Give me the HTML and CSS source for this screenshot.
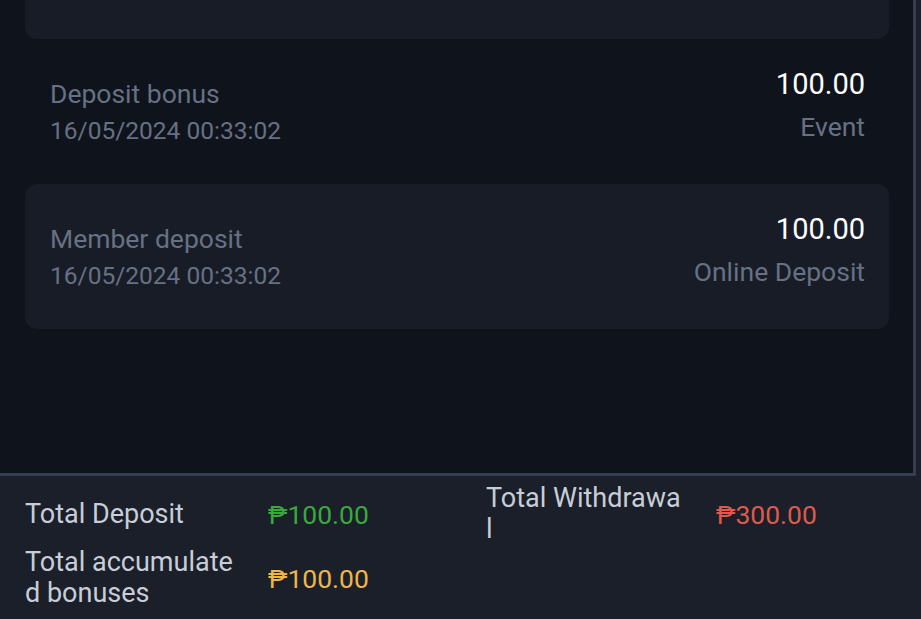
FILE: index.html
```html
<!DOCTYPE html>
<html>
<head>
<meta charset="utf-8">
<link rel="stylesheet" href="styles.css">
</head>
<body>
<div class="screen">
  <div class="list">
    <div class="item card top-cut"></div>
    <div class="item">
      <div class="left">
        <div class="title">Deposit bonus</div>
        <div class="date">16/05/2024 00:33:02</div>
      </div>
      <div class="right">
        <div class="amount">100.00</div>
        <div class="type">Event</div>
      </div>
    </div>
    <div class="item card">
      <div class="left">
        <div class="title">Member deposit</div>
        <div class="date">16/05/2024 00:33:02</div>
      </div>
      <div class="right">
        <div class="amount">100.00</div>
        <div class="type">Online Deposit</div>
      </div>
    </div>
  </div>
  <div class="summary">
    <div class="label l1">Total Deposit</div>
    <div class="value green">₱100.00</div>
    <div class="label l2">Total Withdrawal</div>
    <div class="value red">₱300.00</div>
    <div class="label l1">Total accumulated bonuses</div>
    <div class="value yellow">₱100.00</div>
  </div>
</div>
</body>
</html>
```
FILE: styles.css
```css
* { box-sizing: border-box; }
html, body { margin: 0; padding: 0; }
body {
  background: #1a1f29;
  font-family: Roboto, "Noto Sans", sans-serif;
  width: 921px;
  height: 619px;
  overflow: hidden;
}
.screen {
  display: flex;
  flex-direction: column;
  height: 619px;
}
.list {
  height: 476px;
  width: 916px;
  background: #0f131b;
  border-right: 3px solid #363d51;
  border-bottom: 3px solid #363d51;
  display: flex;
  flex-direction: column;
  padding: 0 24px 0 25px;
  overflow: hidden;
}
.item {
  flex: none;
  height: 145px;
  display: flex;
  justify-content: space-between;
  padding: 0 24px 0 25px;
  border-radius: 12px;
}
.item.card { background: #171c26; }
.item.top-cut {
  height: 39px;
  border-radius: 0 0 12px 12px;
}
.left {
  display: flex;
  flex-direction: column;
  justify-content: center;
}
.title {
  color: #687083;
  font-size: 26.5px;
  line-height: 37px;
}
.date {
  color: #687083;
  font-size: 24.5px;
  line-height: 37px;
}
.right {
  padding-top: 24px;
  text-align: right;
}
.amount {
  color: #ffffff;
  font-size: 29px;
  line-height: 42px;
}
.type {
  color: #687083;
  font-size: 26.5px;
  line-height: 44px;
}
.summary {
  display: grid;
  grid-template-columns: 243px 218px 230px 1fr;
  align-items: center;
  row-gap: 2px;
  padding: 7px 0 0 25px;
}
.label {
  color: #c8cdd7;
  font-size: 27px;
  line-height: 31px;
  word-break: break-all;
}
.label.l1 { width: 214px; }
.label.l2 { width: 196px; }
.value {
  font-size: 26.5px;
  line-height: 31px;
}
.green { color: #3aa93b; }
.red { color: #de5a4c; }
.yellow { color: #eeb54a; }
```
